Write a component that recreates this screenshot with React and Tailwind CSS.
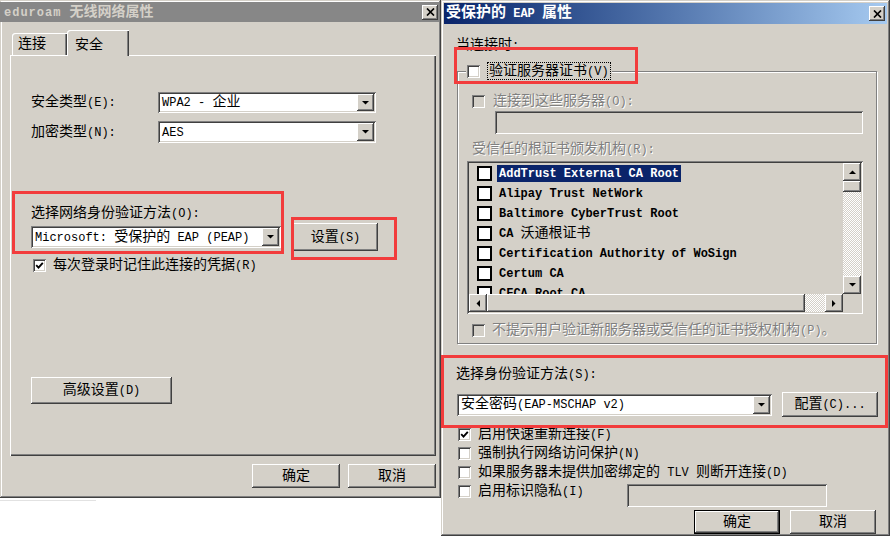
import React from "react";

const CJK = /([\u2E80-\u9FFF\u3000-\u303F\uFF00-\uFFEF]+)/;

const FRAME = "shadow-[inset_-1px_-1px_#404040,inset_1px_1px_#d4d0c8,inset_-2px_-2px_#808080,inset_2px_2px_#ffffff]";
const RAISED = "shadow-[inset_-1px_-1px_#404040,inset_1px_1px_#ffffff,inset_-2px_-2px_#808080,inset_2px_2px_#d4d0c8]";
const SUNKEN = "shadow-[inset_1px_1px_#808080,inset_-1px_-1px_#ffffff,inset_2px_2px_#404040,inset_-2px_-2px_#d4d0c8]";
const DITHER = "bg-[image:repeating-conic-gradient(#ffffff_0_25%,#d4d0c8_0_50%)] bg-[length:2px_2px]";
const DISABLED = "text-[#808080] [text-shadow:1px_1px_0_#ffffff]";

// mixed text: latin runs smaller, CJK runs 14px
function T({ s, latin = "text-[12px]", cjk = "text-[14px]" }) {
  return (
    <span className="whitespace-pre">
      {s
        .split(CJK)
        .filter(Boolean)
        .map((p, i) =>
          CJK.test(p) ? (
            <span key={i} className={cjk}>{p}</span>
          ) : (
            <span key={i} className={latin}>{p}</span>
          )
        )}
    </span>
  );
}

function Tri({ dir }) {
  const pts = {
    up: "0,4 7,4 3.5,0.5",
    down: "0,0 7,0 3.5,3.5",
    left: "4,0 4,7 0.5,3.5",
    right: "0,0 0,7 3.5,3.5",
  }[dir];
  const v = dir === "up" || dir === "down";
  return (
    <svg width={v ? 7 : 4} height={v ? 4 : 7} viewBox={v ? "0 0 7 4" : "0 0 4 7"}>
      <polygon points={pts} fill="#000" />
    </svg>
  );
}

function CloseBtn() {
  return (
    <span className={`flex h-[15px] w-[16px] items-center justify-center bg-[#d4d0c8] ${RAISED}`}>
      <svg width="9" height="8" viewBox="0 0 9 8">
        <path d="M1 0.5 L8 7.5 M8 0.5 L1 7.5" stroke="#000" strokeWidth="1.7" />
      </svg>
    </span>
  );
}

function Check({ checked, disabled }) {
  return (
    <span className={`flex h-[13px] w-[13px] shrink-0 items-center justify-center ${SUNKEN} ${disabled ? "bg-[#d4d0c8]" : "bg-white"}`}>
      {checked && (
        <svg width="9" height="9" viewBox="0 0 9 9">
          <path d="M1.2 4.2 L3.5 6.6 L7.8 1.8" stroke="#000" strokeWidth="1.9" fill="none" />
        </svg>
      )}
    </span>
  );
}

function Select({ value, className }) {
  return (
    <div className={`flex items-stretch bg-white p-[2px] ${SUNKEN} ${className}`}>
      <span className="flex flex-1 items-center overflow-hidden whitespace-nowrap pl-[2px] leading-[16px]">
        <T s={value} />
      </span>
      <span className={`flex w-[17px] items-center justify-center bg-[#d4d0c8] ${RAISED}`}>
        <Tri dir="down" />
      </span>
    </div>
  );
}

function Btn({ children, className, def }) {
  return (
    <div className={`flex items-center justify-center bg-[#d4d0c8] leading-[16px] ${def ? "border border-black" : ""} ${RAISED} ${className}`}>
      {children}
    </div>
  );
}

function Red({ className }) {
  return <div className={`pointer-events-none absolute border-[3px] border-[#f23c3c] ${className}`} />;
}

const certs = [
  "AddTrust External CA Root",
  "Alipay Trust NetWork",
  "Baltimore CyberTrust Root",
  "CA 沃通根证书",
  "Certification Authority of WoSign",
  "Certum CA",
  "CFCA Root CA",
];

function LeftWindow() {
  return (
    <div className="flex w-[441px] flex-col bg-white">
      <div className={`flex h-[498px] flex-col bg-[#d4d0c8] ${FRAME}`}>
        {/* title bar (inactive) */}
        <div className="mr-[2px] mt-[2px] flex h-[20px] items-center justify-between bg-[#878787] pl-[4px] pr-[1px] font-bold text-[#d4d0c8]">
          <span className="leading-[16px]">
            <T s="eduroam 无线网络属性" latin="text-[12px] tracking-[1px]" />
          </span>
          <CloseBtn />
        </div>

        {/* tabs */}
        <div className="mt-[8px] flex h-[25px] items-end pl-[12px]">
          <div className="flex h-[22px] w-[55px] items-center rounded-tl-[3px] pl-[6px] shadow-[inset_1px_1px_#ffffff,inset_-1px_0_#404040,inset_-2px_0_#808080]">
            <T s="连接" />
          </div>
          <div className="relative z-10 -mb-px flex h-[26px] w-[62px] items-start rounded-tl-[3px] bg-[#d4d0c8] pl-[8px] pt-[3px] shadow-[inset_1px_1px_#ffffff,inset_-1px_0_#404040,inset_-2px_0_#808080]">
            <T s="安全" />
          </div>
        </div>

        {/* tab panel */}
        <div className="ml-[10px] flex h-[401px] w-[426px] flex-col pl-[21px] pt-[37px] shadow-[inset_1px_1px_#ffffff,inset_-1px_-1px_#404040,inset_-2px_-2px_#808080]">
          <div className="flex h-[21px] items-center">
            <span className="w-[127px] leading-[16px]"><T s="安全类型(E):" /></span>
            <Select value="WPA2 - 企业" className="h-[21px] w-[218px]" />
          </div>
          <div className="mt-[8px] flex h-[22px] items-center">
            <span className="w-[127px] leading-[16px]"><T s="加密类型(N):" /></span>
            <Select value="AES" className="h-[22px] w-[218px]" />
          </div>

          <div className="mt-[62px] leading-[16px]"><T s="选择网络身份验证方法(O):" /></div>
          <div className="mt-[1px] flex h-[28px] items-center">
            <Select value="Microsoft: 受保护的 EAP (PEAP)" className="h-[22px] w-[250px]" />
            <Btn className="ml-[12px] h-[28px] w-[85px]"><T s="设置(S)" /></Btn>
          </div>
          <div className="mt-[6px] flex h-[16px] items-center gap-[7px] pl-[2px]">
            <Check checked />
            <span className="leading-[16px]"><T s="每次登录时记住此连接的凭据(R)" /></span>
          </div>

          <Btn className="mt-[104px] h-[27px] w-[141px]"><T s="高级设置(D)" /></Btn>
        </div>

        {/* dialog buttons */}
        <div className="mt-[8px] flex justify-end gap-[8px] pr-[5px]">
          <Btn className="h-[24px] w-[88px]"><T s="确定" /></Btn>
          <Btn className="h-[24px] w-[88px]"><T s="取消" /></Btn>
        </div>
      </div>
      <div className="mt-[2px] h-px w-[96px] bg-[#e2e2e2]" />
    </div>
  );
}

function CertList() {
  return (
    <div className={`ml-[9px] mt-[3px] grid h-[153px] w-[396px] grid-cols-[1fr_18px] grid-rows-[1fr_18px] bg-[#d4d0c8] p-[2px] ${SUNKEN}`}>
      <div className="overflow-hidden pl-[8px]">
        {certs.map((c, i) => (
          <div key={c} className="flex h-[20px] items-center">
            <span className="h-[15px] w-[15px] shrink-0 border-2 border-black bg-white" />
            <span className={`ml-[5px] h-[17px] px-[2px] leading-[17px] ${i === 0 ? "bg-[#0a246a] text-white" : ""}`}>
              <T s={c} latin="text-[12px] font-bold" />
            </span>
          </div>
        ))}
      </div>
      <div className="flex flex-col">
        <span className={`flex h-[18px] items-center justify-center ${RAISED}`}><Tri dir="up" /></span>
        <span className={`h-[11px] ${RAISED}`} />
        <span className={`flex-1 ${DITHER}`} />
        <span className={`flex h-[18px] items-center justify-center ${RAISED}`}><Tri dir="down" /></span>
      </div>
      <div className="flex">
        <span className={`flex w-[18px] items-center justify-center ${RAISED}`}><Tri dir="left" /></span>
        <span className={`w-[318px] ${RAISED}`} />
        <span className={`flex-1 ${DITHER}`} />
        <span className={`flex w-[18px] items-center justify-center ${RAISED}`}><Tri dir="right" /></span>
      </div>
      <div />
    </div>
  );
}

function RightWindow() {
  return (
    <div className={`flex h-[536px] w-[449px] flex-col bg-[#d4d0c8] ${FRAME}`}>
      <div className="mx-[3px] mt-[3px] flex h-[21px] items-center justify-between bg-linear-to-r from-[#0a246a] to-[#a6caf0] pl-[2px] pr-[2px] font-bold text-white">
        <span className="leading-[16px]">
          <T s="受保护的 EAP 属性" latin="text-[12px]" cjk="text-[15px]" />
        </span>
        <CloseBtn />
      </div>

      <div className="ml-[15px] mt-[13px] leading-[16px]"><T s="当连接时:" /></div>

      {/* group box */}
      <div className="ml-[16px] mt-[17px] flex h-[273px] w-[420px] flex-col border border-[#808080] shadow-[inset_1px_1px_#ffffff,1px_1px_#ffffff]">
        <div className="-mt-[10px] ml-[8px] flex h-[18px] w-fit items-center gap-[7px] bg-[#d4d0c8] px-[1px]">
          <Check />
          <span className="flex h-[18px] items-center border border-dotted border-black px-[1px] leading-[16px]">
            <T s="验证服务器证书(V)" />
          </span>
        </div>
        <div className={`ml-[14px] mt-[13px] flex h-[16px] items-center gap-[8px] ${DISABLED}`}>
          <Check disabled />
          <span className="leading-[16px]"><T s="连接到这些服务器(O):" /></span>
        </div>
        <div className={`ml-[37px] mt-[2px] h-[23px] w-[368px] bg-[#d4d0c8] ${SUNKEN}`} />
        <div className={`ml-[14px] mt-[7px] leading-[16px] ${DISABLED}`}><T s="受信任的根证书颁发机构(R):" /></div>
        <CertList />
        <div className={`ml-[14px] mt-[8px] flex h-[16px] items-center gap-[7px] ${DISABLED}`}>
          <Check disabled />
          <span className="leading-[16px]"><T s="不提示用户验证新服务器或受信任的证书授权机构(P)。" /></span>
        </div>
      </div>

      <div className="ml-[15px] mt-[22px] leading-[16px]"><T s="选择身份验证方法(S):" /></div>
      <div className="ml-[16px] mt-[9px] flex h-[25px] items-center">
        <Select value="安全密码(EAP-MSCHAP v2)" className="h-[22px] w-[315px]" />
        <Btn className="ml-[10px] h-[25px] w-[96px]"><T s="配置(C)..." /></Btn>
      </div>

      <div className="ml-[17px] mt-[8px] flex flex-col">
        {[
          ["启用快速重新连接(F)", true],
          ["强制执行网络访问保护(N)", false],
          ["如果服务器未提供加密绑定的 TLV 则断开连接(D)", false],
        ].map(([label, on]) => (
          <div key={label} className="flex h-[19px] items-center gap-[7px]">
            <Check checked={on} />
            <span className="leading-[16px]"><T s={label} /></span>
          </div>
        ))}
        <div className="flex items-start">
          <div className="flex h-[19px] w-[169px] items-center gap-[7px]">
            <Check />
            <span className="leading-[16px]"><T s="启用标识隐私(I)" /></span>
          </div>
          <div className={`mt-[2px] h-[23px] w-[200px] bg-[#d4d0c8] ${SUNKEN}`} />
        </div>
      </div>

      <div className="mt-[3px] flex justify-end gap-[10px] pr-[14px]">
        <Btn def className="h-[24px] w-[86px]"><T s="确定" /></Btn>
        <Btn className="h-[24px] w-[86px]"><T s="取消" /></Btn>
      </div>
    </div>
  );
}

export default function App() {
  return (
    <div className="relative flex h-[536px] w-[890px] overflow-hidden bg-white font-['Liberation_Mono','Noto_Sans_CJK_SC',monospace] text-black">
      <LeftWindow />
      <RightWindow />

      {/* red highlight annotations */}
      <Red className="left-[12px] top-[191px] h-[63px] w-[272px]" />
      <Red className="left-[291px] top-[217px] h-[43px] w-[106px]" />
      <Red className="left-[454px] top-[47px] h-[37px] w-[184px]" />
      <Red className="left-[441px] top-[355px] h-[73px] w-[447px]" />
    </div>
  );
}
